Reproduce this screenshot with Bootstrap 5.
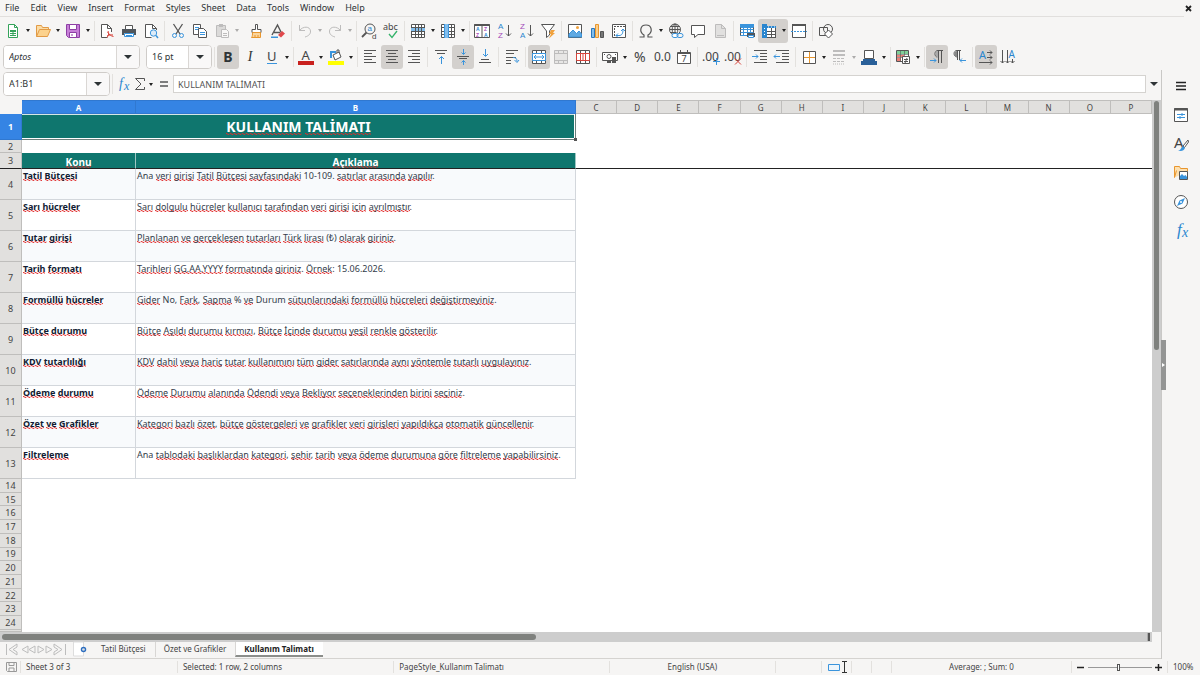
<!DOCTYPE html>
<html lang="tr">
<head>
<meta charset="utf-8">
<meta name="viewport" content="width=device-width, initial-scale=1">
<title>Tatil Bütçesi – Kullanım Talimatı</title>
<link href="https://cdn.jsdelivr.net/npm/bootstrap@5.3.0/dist/css/bootstrap.min.css" rel="stylesheet">
<style>
:root{--ui:#f6f5f4;--rule:#d5d3d0;--ink:#2e3436;--teal:#0f766e;--head:#e1e0de;--blue:#3584e4}
body{font-family:"Noto Sans","Open Sans",sans-serif;font-size:9px;line-height:12px;color:var(--ink);background:var(--ui)}
button{font:inherit;color:inherit;background:none;border:0;padding:0}
svg{display:block;fill:none;stroke:#555;stroke-width:1;overflow:visible}
svg text{stroke:none;fill:#444;font-family:"Noto Sans",sans-serif}
.b{stroke:#3a94dc}.fb{fill:#3a94dc;stroke:none}.lb{fill:#83beec;stroke:none}.r{stroke:#d8443c}.p{stroke:#a349b8}.w{fill:#fff}.o{stroke:#e8962e}.g{stroke:#34a35a}.k{fill:#555;stroke:none}
svg text.fb{fill:#2a86cf}svg text.tp{fill:#a349b8}
svg text.az{font-family:"Liberation Sans",sans-serif}
svg text.fx{font-family:"Liberation Serif",serif;font-style:italic}

/* menu and toolbars */
.menubar{height:17px}
.menubar::after{content:"";height:1px;background:#e1dfdd;position:absolute;left:0;right:16px;top:16px}
.menubar a{color:var(--ink);padding:2px 6px 2px 5px}
.toolrow{height:27px;padding-left:2px}
.toolrow.second{height:26px;padding-left:3px}
.tb{width:22px;height:24px;border-radius:3px;display:flex;align-items:center;justify-content:center;flex:none}
.tb.active,.pair.active{background:#d3d0cd;border-radius:3px}
.tb.mid{width:18px}.tb.slim{width:14px}
.dd{width:8px;height:24px;flex:none;display:flex;align-items:center;justify-content:center}
.dd::before{content:"";border:2px solid transparent;border-top:3px solid #222;border-bottom:0}
.tsep{width:5px;height:20px;flex:none;border-left:1px solid #e3e1de;margin-left:2px;margin-right:-2px}
.dd + .tsep{width:4px}
.off{opacity:.35}
.glyph{font-size:14px;line-height:14px}
.glyph.it{font-family:"Liberation Serif",serif}
.combo{height:24px;border:1px solid #cfccc9;border-radius:4px;background:#fff;overflow:hidden;flex:none}
.combo .form-control{font-size:9px;line-height:12px;padding:0 5px;border:0;border-radius:0;color:var(--ink);min-width:0;min-height:0;box-shadow:none}
.combo button{width:23px;background:#f9f8f8;border-left:1px solid #dad7d4;display:flex;align-items:center;justify-content:center;flex:none}
.tri::before{content:"";border:4px solid transparent;border-top:4px solid #2e3436;border-bottom:0}
.combo-font{width:137px}.combo-size{width:66px;margin-left:6px}.combo-name{width:107px}
.formula-row{height:30px;padding:0 3px 2px;flex:none}
.formula{height:18px;font-size:9px;line-height:12px;border:1px solid var(--rule);border-radius:0;padding:0 4px;color:#555;background:#fff}

/* sheet */
.shrinkable{min-height:0;min-width:0}
.work{border-right:1px solid #c9c8c6;min-width:0}
.grid-table{table-layout:fixed;width:100%;height:100%;border-collapse:separate;border-spacing:0;background:#fff}
.grid-table th,.grid-table td{padding:0;line-height:11px;overflow:hidden;white-space:nowrap}
.grid-table .rh{width:22px}.grid-table .ca{width:114px}.grid-table .cb{width:440px}
.grid-table thead th,.grid-table tbody th{background:var(--head);font-weight:400;text-align:center;vertical-align:middle;border-right:1px solid #bfbebc;border-bottom:1px solid #bfbebc;color:#444}
.grid-table thead th{height:14px;font-size:8px;border-top:1px solid #bfbebc}
.grid-table thead .corner{background:var(--ui);border-color:var(--ui)}
.grid-table thead .sel,.grid-table tbody .sel{background:var(--blue);color:#fff;font-weight:700;border-color:#3078d0}
.row-title{height:26px}.row-gap{height:13px}.row-head{height:16px}.row-item{height:31px}.row-rest{height:2px}
.row-title td.title{position:relative;overflow:visible;background:var(--teal);color:#fff;font-size:14px;line-height:20px;font-weight:700;text-align:center;border-bottom:1px solid #6b7f7b;border-right:1px solid #6b7f7b;box-shadow:inset -1px -1px #fff,inset 0 1px #d5e7e5}
.handle{position:absolute;right:-2px;bottom:-2px;width:3px;height:3px;background:#555}
.grid-table .row-head td,.grid-table .row-head th{border-bottom:1px solid #222}
.row-head .topic,.row-head .desc{background:var(--teal);color:#fff;font-size:10px;font-weight:700;text-align:center;vertical-align:bottom;line-height:12px;border-right:1px solid #9fc7c3}
.row-item .topic,.row-item .desc{vertical-align:top;padding:1px 0 0 1px;border-right:1px solid #d3d7dc;border-bottom:1px solid #d3d7dc}
.row-item .topic{font-weight:700;color:#111c33}
.row-item .desc{color:#333d4b}
.row-item:nth-child(even) .topic,.row-item:nth-child(even) .desc{background:#f8fafc}
.grid-table u{text-decoration:none;background:url("data:image/svg+xml,%3Csvg xmlns='http://www.w3.org/2000/svg' width='4' height='2'%3E%3Cpath d='M0 .5Q1 .5 2 1.300T4 .5' fill='none' stroke='%23e02b2b'/%3E%3C/svg%3E") repeat-x left bottom 1px}
.hbar{height:10px;background:#cdcdcd;padding:2px;flex:none}
.hbar div{height:6px;border-radius:3px;background:#7f817e;width:46.5%}
.hbar i{width:3px;height:8px;background:#555;border-left:1px solid #aaa;margin-top:-1px}
.vbar{width:9px;background:#cdcdcd;padding:1px 2px;margin-bottom:10px;flex:none}
.vbar div{height:47%;border-radius:3px;background:#7f817e}
.side{width:38px;flex:none;padding-top:1px}
.side .sb{width:38px;height:29px;display:flex;align-items:center;justify-content:center}
.grip{position:absolute;left:-1px;top:50%;margin-top:-25px;width:5px;height:50px;background:#949594}
.grip::before{content:"";position:absolute;left:1px;top:23px;border:2px solid transparent;border-left:3px solid #fff;border-right:0}

/* tabs and status */
.tabs{height:17px;border-bottom:1px solid var(--rule);flex:none}
.tabs a{color:#444;height:15px;line-height:14px;font-size:8px;padding:0 9px 0 8px;border-left:1px solid #d8d6d4}
.tabs a:first-of-type{border-color:transparent}
.tabs a.active{background:#fff;font-weight:700;border-bottom:2px solid #8b8d8a;color:#222}
.navi{width:64px}
.addsheet{margin:0 5px}
.status{height:16px;font-size:8px;color:#444}
.status>*{border-left:1px solid #e3e1de;height:12px;line-height:12px;padding:0 5px;white-space:nowrap}
.status>:first-child{border:0;width:20px;padding:0 0 0 6px}
.f1{flex:155 1 0}.f2{flex:218 1 0}.f3{flex:217 1 0}.f4{flex:165 1 0}
.s1{width:46px}.s2{width:30px}.s3{width:20px}.s4{width:180px}.s5{width:96px}.s6{width:33px}
.zoomer{appearance:none;width:64px;height:8px;background:linear-gradient(#999,#999) center/100% 1px no-repeat;margin:0}
.zoomer::-webkit-slider-thumb{appearance:none;width:3px;height:7px;border:1px solid #555;background:#fff}
</style>
</head>
<body class="vh-100 d-flex flex-column overflow-hidden">

<nav class="menubar d-flex align-items-start position-relative" aria-label="Menu">
  <a href="#" class="text-decoration-none">File</a><a href="#" class="text-decoration-none">Edit</a><a href="#" class="text-decoration-none">View</a><a href="#" class="text-decoration-none">Insert</a><a href="#" class="text-decoration-none">Format</a><a href="#" class="text-decoration-none">Styles</a><a href="#" class="text-decoration-none">Sheet</a><a href="#" class="text-decoration-none">Data</a><a href="#" class="text-decoration-none">Tools</a><a href="#" class="text-decoration-none">Window</a><a href="#" class="text-decoration-none">Help</a>
  <button class="ms-auto me-2 pt-1" aria-label="Close document"><svg width="7" height="8" viewBox="0 0 7 8"><path d="M1 2l5 5M6 2L1 7" stroke="#222" stroke-width="1.8"/></svg></button>
</nav>

<div class="toolrow d-flex align-items-center" role="toolbar" aria-label="Standard">
  <button class="tb" aria-label="New"><svg width="16" height="16"><path class="g w" d="M3.5 1.5h6l3 3v10h-9z"/><path class="g" d="M9.5 1.5v3h3M5 8.500h6M5 10.500h6M5 12.500h6M8 8v5"/><path d="M5 7h6v2H5z" fill="#34a35a" stroke="none"/></svg></button><button class="dd" aria-label="New options"></button>
  <button class="tb" aria-label="Open"><svg width="16" height="16"><path d="M1.500 13.500v-11h5l1 2h6v2" stroke="#e29a45" fill="#fbdca5"/><path d="M1.500 13.500l3-7h11l-3 7z" stroke="#e29a45" fill="#fcd28d"/></svg></button><button class="dd" aria-label="Open options"></button>
  <button class="tb" aria-label="Save"><svg width="16" height="16"><path d="M1.500 1.500h13v13h-11l-2-2z" stroke="#8e3fa5" fill="#c77fd8"/><path d="M4.500 1.500h7v5h-7zM4.500 9.500h7v5h-7z" class="w" stroke="#8e3fa5"/><path d="M6 12h2" stroke="#8e3fa5"/></svg></button><button class="dd" aria-label="Save options"></button>
  <span class="tsep"></span>
  <button class="tb" aria-label="Export as PDF"><svg width="16" height="16"><path class="w" d="M12.500 9V5.500l-4-4h-6v13h6"/><path d="M8.500 1.500v4h4"/><path class="r" d="M9 8c1 2 1 4-1 6.500M8.500 9c2 3 3.500 4 6 4.500M8 13c2-1 4-1.500 6-1"/></svg></button>
  <button class="tb" aria-label="Print"><svg width="16" height="16"><path class="w" d="M4.500 2.500h7v4h-7z"/><path d="M1 6h14v6h-2v-2H3v2H1z" fill="#50565c" stroke="none"/><path class="b w" d="M3.500 10.500h9v3h-9z"/><path class="b" d="M5 12.500h6"/></svg></button>
  <button class="tb" aria-label="Print preview"><svg width="16" height="16"><path class="w" d="M13.500 7V5.500l-4-4h-7v13h6"/><path d="M9.500 1.500v4h4"/><circle class="b" cx="10.500" cy="10" r="3.200" fill="#dcebf8"/><path class="b" d="M13 12.500l2 2.500" stroke-width="1.500"/></svg></button>
  <span class="tsep"></span>
  <button class="tb" aria-label="Cut"><svg width="16" height="16"><path d="M3.500 1l6.500 10M12.500 1L6 11" stroke-width="1.300"/><circle class="b" cx="4.500" cy="12.500" r="2"/><circle class="b" cx="11.500" cy="12.500" r="2"/></svg></button>
  <button class="tb" aria-label="Copy"><svg width="16" height="16"><path class="w" d="M1.500 1.500h7v10h-7z"/><path class="b" d="M3 4.500h4M3 6.500h4"/><path class="w" d="M6.500 5.500h5l3 3v6h-8z"/><path class="b" d="M8 9.500h5M8 11.500h5"/></svg></button>
  <button class="tb off" aria-label="Paste"><svg width="16" height="16"><path d="M2.500 2.500h9v11h-9z" fill="#aaa"/><path d="M5 1h4v3H5z" class="k"/><path class="w" d="M7.500 6.500h5l2 2v6h-7z"/><path d="M9 10.500h4M9 12.500h4"/></svg></button><button class="dd off" aria-label="Paste options"></button>
  <span class="tsep border-0"></span>
  <button class="tb" aria-label="Clone formatting"><svg width="16" height="16"><path d="M7.500 1.500h2v5h3.500v3H4v-3h3.500z" class="w"/><path class="o" d="M4.500 9.500h8v5h-9c1-1 1-3 1-5z" fill="#fbd49a"/><path class="o" d="M7 14v-2M10 14v-2"/></svg></button>
  <button class="tb" aria-label="Clear formatting"><svg width="16" height="16"><path d="M2 12L7.500 2l4 8M4 9.500h6" stroke-width="1.400"/><path class="fb" d="M1 13.500h7v1.500H1z"/><path d="M8 12l4-4 3 2.500-4 4z" fill="#e0484c" stroke="none"/></svg></button>
  <span class="tsep"></span>
  <button class="tb off" aria-label="Undo"><svg width="16" height="16"><path d="M2.500 2v5.500H8M2.500 7.500C6 3 13 3 13.500 8c.3 3-2 5-5.500 6"/></svg></button><button class="dd off" aria-label="Undo list"></button>
  <button class="tb off" aria-label="Redo"><svg width="16" height="16"><path d="M13.500 2v5.500H8M13.500 7.500C10 3 3 3 2.500 8c-.3 3 2 5 5.500 6"/></svg></button><button class="dd off" aria-label="Redo list"></button>
  <span class="tsep"></span>
  <button class="tb" aria-label="Find and replace"><svg width="16" height="16"><circle cx="9" cy="6" r="5"/><path d="M5.500 9.500L1 14" stroke-width="1.800"/><text class="fb az" x="6.500" y="7.500" font-size="8">a</text><text class="az" x="11" y="15.500" font-size="8">d</text></svg></button>
  <button class="tb" aria-label="Spelling"><svg width="18" height="16"><text x="1" y="7" font-size="9">abc</text><path d="M7 11l3 3.500L15 8" stroke="#34b36a" stroke-width="1.300"/></svg></button>
  <span class="tsep"></span>
  <button class="tb" aria-label="Row"><svg width="16" height="16"><path class="w" d="M1.500 1.500h13v13h-13z"/><path class="lb" d="M1 5h14v3H1z"/><path d="M1.500 4.500h13M1.500 8.500h13M1.500 11.500h13M5.500 1v13M8.500 1v13M11.500 1v13"/></svg></button><button class="dd" aria-label="Row options"></button>
  <button class="tb" aria-label="Column"><svg width="16" height="16"><path class="w" d="M1.500 1.500h13v13h-13z"/><path d="M1.500 4.500h13M1.500 8.500h13M1.500 11.500h13M11.500 1v13"/><path class="lb" d="M4.500 1h4v14h-4z"/><path class="b" d="M4.500 1v14M8.500 1v14"/></svg></button><button class="dd" aria-label="Column options"></button>
  <span class="tsep"></span>
  <button class="tb" aria-label="Sort"><svg width="16" height="16"><path class="w" d="M.5 1.500h15v13H.5zM8 2v12"/><path d="M.5 2h15" stroke-width="2"/><text class="fb az" x="2" y="8" font-size="5" font-weight="700">A</text><text class="tp az" x="2" y="14" font-size="5" font-weight="700">Z</text><text class="tp az" x="10" y="8" font-size="5" font-weight="700">Z</text><text class="fb az" x="10" y="14" font-size="5" font-weight="700">A</text></svg></button>
  <button class="tb" aria-label="Sort ascending"><svg width="16" height="16"><text class="fb az" x="2" y="6" font-size="8">A</text><text class="tp az" x="2" y="15" font-size="8">Z</text><path d="M12.500 2v11M10 10.500l2.500 2.500 2.500-2.500"/></svg></button>
  <button class="tb" aria-label="Sort descending"><svg width="16" height="16"><text class="tp az" x="2" y="6" font-size="8">Z</text><text class="fb az" x="2" y="15" font-size="8">A</text><path d="M12.500 2v11M10 10.500l2.500 2.500 2.500-2.500"/></svg></button>
  <button class="tb" aria-label="AutoFilter"><svg width="16" height="16"><path class="w" d="M1.500 1.500h13L9.500 8v4l-3 2.500V8z"/><path d="M11 7h4l-2 3h2l-6 5.500L11 11H9z" fill="#f0a13c" stroke="none"/></svg></button>
  <span class="tsep"></span>
  <button class="tb" aria-label="Insert image"><svg width="16" height="16"><path class="w" d="M1.500 1.500h13v13h-13z"/><path d="M2 14v-3l4-4 3.500 3.500L12 8l2.500 3v3z" fill="#5fa9e2" class="b"/><circle cx="10.500" cy="4.500" r="1.500" fill="#f0a13c" stroke="none"/></svg></button>
  <button class="tb" aria-label="Insert chart"><svg width="16" height="16"><path d="M2.500 5.500h3v9h-3z" fill="#83beec" stroke="#2a78bd"/><path class="o" d="M6.500 1.500h3v13h-3z" fill="#fbcf8c"/><path d="M11.500 8.500h3v6h-3z" fill="#777"/></svg></button>
  <button class="tb" aria-label="Pivot table"><svg width="16" height="16"><path class="w" d="M1.500 1.500h13v13h-13z"/><path d="M3 3.500h11M3.500 5v9" stroke-dasharray="2 1"/><path class="b" d="M5 12.500h3c3 0 4-2 4-6M10 8l2-2 2 2M7 10.500l-2 2 2 2"/></svg></button>
  <span class="tsep"></span>
  <button class="tb" aria-label="Special character"><svg width="16" height="16"><path d="M1.500 14H6v-2C1 9 2 2 8 2s7 7 2 10v2h4.500" stroke-width="1.200"/></svg></button><button class="dd" aria-label="Special character list"></button>
  <button class="tb" aria-label="Hyperlink"><svg width="16" height="16"><circle cx="7" cy="6.500" r="5.500"/><path d="M1.500 6.500h11M2.500 3.500h9M2.500 9.500h6M7 1v11"/><ellipse cx="7" cy="6.500" rx="2.800" ry="5.500"/><rect class="b w" x="4" y="10.500" width="6" height="4" rx="2"/><rect class="b" x="9" y="10.500" width="6" height="4" rx="2"/></svg></button>
  <button class="tb" aria-label="Comment"><svg width="16" height="16"><path class="w" d="M1.500 2.500h13v9H8l-3.500 3v-3h-3z"/></svg></button>
  <button class="tb off" aria-label="Headers and footers"><svg width="16" height="16"><path d="M3.500 1.500h6l4 4v9h-10z" fill="#bbb"/><path d="M9.500 1.500v4h4M5 12.500h7"/></svg></button>
  <span class="tsep"></span>
  <button class="tb" aria-label="Print area"><svg width="16" height="16"><path class="w" d="M1.500 1.500h13v11h-13z"/><path class="fb" d="M1 1h14v3H1z"/><path class="b" d="M1.500 4.500h13M1.500 6.500h13M1.500 9.500h13M1.500 12.500h7M4.500 1v12M8.500 4v9M11.500 4v6"/><path d="M8 10h8v4H8z" fill="#50565c" stroke="none"/><path class="w b" d="M9.500 12.500h5v2h-5z"/></svg></button>
  <span class="pair active d-flex"><button class="tb" aria-label="Freeze rows and columns"><svg width="16" height="16"><path class="w" d="M1.500 3.500h13v11h-13z"/><path d="M1.500 8.500h13M1.500 11.500h13M10.500 4v11M14.500 4v11"/><path fill="#2a86cf" stroke="none" d="M1 3h14v2H1zM1 1h5v14H1z"/><path stroke="#fff" d="M3.500 5v9M7 4h7" stroke-dasharray="1 2"/></svg></button><button class="dd" aria-label="Freeze options"></button></span>
  <button class="tb" aria-label="Split window"><svg width="16" height="16"><path class="w" d="M1.500 1.500h13v13h-13z"/><path d="M1 2h14" stroke-width="2"/><path class="b" d="M0 8.500h16" stroke-dasharray="2 1"/></svg></button>
  <span class="tsep"></span>
  <button class="tb" aria-label="Draw functions"><svg width="16" height="16"><path d="M1.500 4.500h8v8h-8z"/><circle cx="10" cy="6" r="4.500"/><path class="w" d="M10.500 7l4 4-4 4-4-4z"/></svg></button>
</div>

<div class="toolrow second d-flex align-items-center" role="toolbar" aria-label="Formatting">
  <div class="combo combo-font d-flex"><input class="form-control fst-italic" value="Aptos" aria-label="Font name"><button class="tri" aria-label="Font list"></button></div>
  <div class="combo combo-size d-flex"><input class="form-control" value="16 pt" aria-label="Font size"><button class="tri" aria-label="Size list"></button></div>
  <span class="tsep"></span>
  <button class="tb active" aria-label="Bold"><b class="glyph">B</b></button>
  <button class="tb" aria-label="Italic"><i class="glyph it">I</i></button>
  <button class="tb" aria-label="Underline"><svg width="16" height="16"><text x="3" y="12" font-size="13">U</text><path class="b" d="M3 14.500h10"/></svg></button><button class="dd" aria-label="Underline styles"></button>
  <span class="tsep"></span>
  <button class="tb" aria-label="Font colour"><svg width="16" height="16"><text x="3.500" y="10.500" font-size="13">A</text><path d="M0 12h16v4H0z" fill="#c9211e" stroke="none"/></svg></button><button class="dd" aria-label="Font colours"></button>
  <button class="tb" aria-label="Background colour"><svg width="16" height="16"><path class="b" d="M3 9V3h5" stroke-width="2"/><path class="w" d="M5 6l6-3 2 5-6 3zM9 4V1h2v3"/><path d="M0 12h16v4H0z" fill="#ff0" stroke="none"/></svg></button><button class="dd" aria-label="Background colours"></button>
  <span class="tsep"></span>
  <button class="tb" aria-label="Align left"><svg width="16" height="16"><path d="M2 1.500h12M2 4.500h8M2 7.500h12M2 10.500h8M2 13.500h12"/></svg></button>
  <button class="tb active" aria-label="Align centre"><svg width="16" height="16"><path d="M2 1.500h12M4 4.500h8M2 7.500h12M4 10.500h8M2 13.500h12"/></svg></button>
  <button class="tb" aria-label="Align right"><svg width="16" height="16"><path d="M2 1.500h12M6 4.500h8M2 7.500h12M6 10.500h8M2 13.500h12"/></svg></button>
  <span class="tsep"></span>
  <button class="tb" aria-label="Align top"><svg width="16" height="16"><path d="M2 1.500h12M4 4.500h8"/><path class="b" d="M8.500 15V7.500M6 10l2.500-2.500L11 10"/></svg></button>
  <button class="tb active" aria-label="Centre vertically"><svg width="16" height="16"><path d="M2 7.500h12M4 9.500h8"/><path class="b" d="M8.500 0v5M6.500 3.500l2 2 2-2M8.500 16v-4.500M6.500 13.500l2-2 2 2"/></svg></button>
  <button class="tb" aria-label="Align bottom"><svg width="16" height="16"><path d="M2 13.500h12M4 10.500h8"/><path class="b" d="M8.500 0v7M6 5l2.500 2.500L11 5"/></svg></button>
  <span class="tsep"></span>
  <button class="tb" aria-label="Wrap text"><svg width="16" height="16"><path d="M2 1.500h12M2 4.500h8M2 8.500h10M2 11.500h5M2 14.500h5"/><path class="b" d="M9 8.500c3 0 4 1 4 4M10.500 11l2.500 2.500L15 11"/></svg></button>
  <span class="tsep"></span>
  <button class="tb active" aria-label="Merge and centre cells"><svg width="16" height="16"><path class="w" d="M1.500 1.500h13v13h-13zM1.500 4.500h13M1.500 11.500h13M5.500 1v3M10.500 1v3M5.500 12v3M10.500 12v3"/><path class="b w" d="M1.500 4.500h13v7h-13z"/><path class="b" d="M3 8h10M5 6L3 8l2 2M11 6l2 2-2 2"/></svg></button>
  <button class="tb off" aria-label="Merge cells"><svg width="16" height="16"><path fill="#ccc" d="M1.500 1.500h13v13h-13zM1.500 4.500h13M1.500 11.500h13M5.500 1v3M10.500 1v3M5.500 12v3M10.500 12v3"/></svg></button>
  <button class="tb" aria-label="Unmerge cells"><svg width="16" height="16"><path class="w" d="M1.500 1.500h13v13h-13zM5.500 1v14M10.500 1v14"/><path class="r" d="M1.500 4.500h13v7h-13zM5.500 4.500v7M8 4.500v7M10.500 4.500v7"/></svg></button>
  <span class="tsep"></span>
  <button class="tb" aria-label="Currency"><svg width="16" height="16"><path class="w" d="M.5 3.500h15v8H.5z"/><circle cx="7" cy="7.500" r="2"/><path d="M2 5h1v1H2zM13 5h1v1h-1zM5 11h4v3H5zM10 8h4v6h-4z" class="k"/></svg></button><button class="dd" aria-label="Currency formats"></button>
  <button class="tb" aria-label="Percent"><svg width="16" height="16"><text x="2" y="13" font-size="14">%</text></svg></button>
  <button class="tb" aria-label="Number"><svg width="16" height="16"><text x="0" y="12" font-size="12">0.0</text></svg></button>
  <button class="tb" aria-label="Date"><svg width="16" height="16"><path class="w" d="M1.500 3.500h13v11h-13z"/><path d="M1.500 4.500h13M4.500 1v3M11.500 1v3"/><text x="5.500" y="13" font-size="9">7</text></svg></button>
  <span class="tsep"></span>
  <button class="tb" aria-label="Add decimal place"><svg width="16" height="16"><text x="-1" y="12" font-size="12">.00</text><path class="b" d="M10 12.500h7M13.500 9v7"/></svg></button>
  <button class="tb" aria-label="Delete decimal place"><svg width="16" height="16"><text x="-1" y="12" font-size="12">.00</text><path class="r" d="M10 9.500l6 6M16 9.500l-6 6"/></svg></button>
  <span class="tsep"></span>
  <button class="tb" aria-label="Increase indent"><svg width="16" height="16"><path d="M2 1.500h13M8 4.500h7M8 7.500h7M8 10.500h7M2 13.500h13"/><path class="b" d="M0 7.500h6M4 5.500l2 2-2 2"/></svg></button>
  <button class="tb" aria-label="Decrease indent"><svg width="16" height="16"><path d="M2 1.500h13M8 4.500h7M8 7.500h7M8 10.500h7M2 13.500h13"/><path class="b" d="M0 7.500h6M2 5.500l-2 2 2 2"/></svg></button>
  <span class="tsep"></span>
  <button class="tb" aria-label="Borders"><svg width="16" height="16"><path class="w" d="M2.500 2.500h12v12h-12z"/><path class="o" d="M8.500 3v11M3 8.500h11"/></svg></button><button class="dd" aria-label="Border list"></button>
  <button class="tb off" aria-label="Border style"><svg width="16" height="16"><path d="M2 2h12M2 6h12" stroke-width="2"/><path d="M2 9.500h12M2 12.500h12" stroke-dasharray="3 1"/><path d="M2 15h12" stroke-dasharray="1 1"/></svg></button><button class="dd off" aria-label="Border styles"></button>
  <button class="tb" aria-label="Border colour"><svg width="16" height="16"><path class="w" d="M3.500 1.500h9v8h-9z"/><path d="M0 12h16v4H0zM2 10h12v2H2z" fill="#2a6099" stroke="none"/></svg></button><button class="dd" aria-label="Border colours"></button>
  <span class="tsep"></span>
  <button class="tb" aria-label="Conditional formatting"><svg width="16" height="16"><path class="w" d="M1.500 1.500h12v11h-12z"/><path d="M2 2h11v3H2z" fill="#7fcf98" stroke="none"/><path d="M2 6h7v2H2zM2 9h4v3H2z" fill="#e98078" stroke="none"/><path d="M1.500 5.500h12M1.500 8.500h12M5.500 1v12M9.500 1v12" stroke-opacity=".6"/><path class="w" d="M7.500 7.500h7v7h-7z"/><path d="M9 10.500h4M9 12.500h4M12 9l-2 5"/></svg></button><button class="dd" aria-label="Conditional list"></button>
  <span class="tsep"></span>
  <button class="tb active" aria-label="Left-to-right"><svg width="16" height="16"><path d="M8.500 8C5 8 5 1.500 9 1.500h5M9.500 1.500V14M12.500 1.500V14"/><path d="M9 2v6C5.500 8 5.500 2 9 2z" fill="#aaa" stroke="none"/><path class="b" d="M1 11.500h6M5 9.500l2 2-2 2"/></svg></button>
  <button class="tb" aria-label="Right-to-left"><svg width="16" height="16"><path d="M6.500 8C2 8 2 1.500 6 1.500h4M6.500 1.500V11M8.500 1.500V11"/><path d="M6 2v6C2.500 8 2.500 2 6 2z" fill="#888" stroke="none"/><path class="b" d="M9 11.500h6M11 9.500l-2 2 2 2"/></svg></button>
  <span class="tsep"></span>
  <button class="tb active" aria-label="Horizontal text"><svg width="16" height="16"><text class="fb" x="1" y="10" font-size="11">A</text><path d="M9 3.500h5M9 8.500h5M1 13.500h13M12 1.500l2 2-2 2M12 6.500l2 2-2 2M12 11.500l2 2-2 2"/></svg></button>
  <button class="tb" aria-label="Vertical text"><svg width="16" height="16"><text class="fb" x="8.500" y="9" font-size="10">A</text><path d="M2.500 1v13M7.500 1v13M12.500 10v4M.5 12l2 2 2-2M5.500 12l2 2 2-2M10.500 12l2 2 2-2"/></svg></button>
</div>

<div class="d-flex flex-grow-1 shrinkable">
  <div class="work flex-grow-1 d-flex flex-column">
    <div class="formula-row d-flex align-items-center">
      <div class="combo combo-name d-flex"><input class="form-control" value="A1:B1" aria-label="Name box"><button class="tri" aria-label="Names"></button></div>
      <span class="tsep"></span>
      <button class="tb mid" aria-label="Function wizard"><svg width="16" height="16"><text class="fb fx" x="3" y="12" font-size="14">f</text><text class="fb fx" x="8" y="14" font-size="12">x</text></svg></button>
      <button class="tb slim" aria-label="Sum"><svg width="12" height="14"><path d="M10.500 4V1.500h-9L7 7l-5.500 5.500h9V10"/></svg></button><button class="dd" aria-label="Functions"></button>
      <button class="tb mid" aria-label="Formula"><svg width="10" height="8"><path d="M1 2h8M1 6h8" stroke-width="1.500"/></svg></button>
      <input class="form-control formula" value="KULLANIM TALİMATI" aria-label="Input line">
      <button class="tri d-flex ps-1" aria-label="Expand formula bar"></button>
    </div>
    <div class="d-flex flex-grow-1 shrinkable">
      <div class="d-flex flex-column flex-grow-1 shrinkable">
        <div class="flex-grow-1 overflow-hidden shrinkable">
        <table class="grid-table">
          <thead><tr><th class="rh corner"></th><th class="ca sel">A</th><th class="cb sel">B</th><th>C</th><th>D</th><th>E</th><th>F</th><th>G</th><th>H</th><th>I</th><th>J</th><th>K</th><th>L</th><th>M</th><th>N</th><th>O</th><th>P</th></tr></thead>
          <tbody>
          <tr class="row-title"><th class="sel">1</th><td colspan="2" class="title"><span data-spell>KULLANIM TALİMATI</span><span class="handle"></span></td><td colspan="14"></td></tr>
          <tr class="row-gap"><th>2</th><td colspan="16"></td></tr>
          <tr class="row-head"><th>3</th><td class="topic" data-spell>Konu</td><td class="desc" data-spell>Açıklama</td><td colspan="14"></td></tr>
          <tr class="row-item"><th>4</th><td class="topic" data-spell>Tatil Bütçesi</td><td class="desc" data-spell>Ana veri girişi Tatil Bütçesi sayfasındaki 10-109. satırlar arasında yapılır.</td><td colspan="14"></td></tr>
          <tr class="row-item"><th>5</th><td class="topic" data-spell>Sarı hücreler</td><td class="desc" data-spell>Sarı dolgulu hücreler kullanıcı tarafından veri girişi için ayrılmıştır.</td><td colspan="14"></td></tr>
          <tr class="row-item"><th>6</th><td class="topic" data-spell>Tutar girişi</td><td class="desc" data-spell>Planlanan ve gerçekleşen tutarları Türk lirası (₺) olarak giriniz.</td><td colspan="14"></td></tr>
          <tr class="row-item"><th>7</th><td class="topic" data-spell>Tarih formatı</td><td class="desc" data-spell>Tarihleri GG.AA.YYYY formatında giriniz. Örnek: 15.06.2026.</td><td colspan="14"></td></tr>
          <tr class="row-item"><th>8</th><td class="topic" data-spell>Formüllü hücreler</td><td class="desc" data-spell>Gider No, Fark, Sapma % ve Durum sütunlarındaki formüllü hücreleri değiştirmeyiniz.</td><td colspan="14"></td></tr>
          <tr class="row-item"><th>9</th><td class="topic" data-spell>Bütçe durumu</td><td class="desc" data-spell>Bütçe Aşıldı durumu kırmızı, Bütçe İçinde durumu yeşil renkle gösterilir.</td><td colspan="14"></td></tr>
          <tr class="row-item"><th>10</th><td class="topic" data-spell>KDV tutarlılığı</td><td class="desc" data-spell>KDV dahil veya hariç tutar kullanımını tüm gider satırlarında aynı yöntemle tutarlı uygulayınız.</td><td colspan="14"></td></tr>
          <tr class="row-item"><th>11</th><td class="topic" data-spell>Ödeme durumu</td><td class="desc" data-spell>Ödeme Durumu alanında Ödendi veya Bekliyor seçeneklerinden birini seçiniz.</td><td colspan="14"></td></tr>
          <tr class="row-item"><th>12</th><td class="topic" data-spell>Özet ve Grafikler</td><td class="desc" data-spell>Kategori bazlı özet, bütçe göstergeleri ve grafikler veri girişleri yapıldıkça otomatik güncellenir.</td><td colspan="14"></td></tr>
          <tr class="row-item"><th>13</th><td class="topic" data-spell>Filtreleme</td><td class="desc" data-spell>Ana tablodaki başlıklardan kategori, şehir, tarih veya ödeme durumuna göre filtreleme yapabilirsiniz.</td><td colspan="14"></td></tr>
          <tr><th>14</th><td colspan="16"></td></tr>
          <tr><th>15</th><td colspan="16"></td></tr>
          <tr><th>16</th><td colspan="16"></td></tr>
          <tr><th>17</th><td colspan="16"></td></tr>
          <tr><th>18</th><td colspan="16"></td></tr>
          <tr><th>19</th><td colspan="16"></td></tr>
          <tr><th>20</th><td colspan="16"></td></tr>
          <tr><th>21</th><td colspan="16"></td></tr>
          <tr><th>22</th><td colspan="16"></td></tr>
          <tr><th>23</th><td colspan="16"></td></tr>
          <tr><th>24</th><td colspan="16"></td></tr>
          <tr class="row-rest"><th></th><td colspan="16"></td></tr>
          </tbody>
        </table>
        </div>
        <div class="hbar d-flex justify-content-between"><div></div><i></i></div>
      </div>
      <div class="vbar"><div></div></div>
    </div>
    <nav class="tabs d-flex align-items-start" aria-label="Sheets">
      <button class="navi ms-1" aria-label="Scroll sheets"><svg width="64" height="14"><path stroke="#bdbdbd" d="M2.500 2v11M13 2L5 7.500l8 5.500v-3l-4-2.500L13 5zM24 4l-6 3.500 6 3.500zM31 4l-6 3.500 6 3.500zM34 4l6 3.500-6 3.500zM42 4l6 3.500-6 3.500zM50 2l8 5.500-8 5.500v-3l4-2.500L50 5zM61.500 2v11"/></svg></button>
      <button class="addsheet" aria-label="Add sheet"><svg width="14" height="15"><path d="M.5 0h10v14H.5z" fill="#fff" stroke="#ddd"/><circle cx="10.500" cy="7.500" r="2" stroke="#2f6fbf" stroke-width="1.500"/></svg></button>
      <a href="#" class="text-decoration-none">Tatil Bütçesi</a><a href="#" class="text-decoration-none">Özet ve Grafikler</a><a href="#" class="text-decoration-none active">Kullanım Talimatı</a>
    </nav>
  </div>
  <aside class="side position-relative" aria-label="Sidebar">
    <button class="sb" aria-label="Sidebar settings"><svg width="10" height="10"><path d="M0 1.500h10M0 5h10M0 8.500h10" stroke="#222" stroke-width="1.400"/></svg></button>
    <button class="sb" aria-label="Properties"><svg width="16" height="16"><path class="w" d="M1.500 1.500h13v13h-13z"/><path d="M1 2.500h14" stroke-width="2"/><path class="b" d="M4 7.500h8M4 10.500h8M9 6v3M7 9v3"/></svg></button>
    <button class="sb" aria-label="Styles"><svg width="16" height="16"><text x="1" y="12" font-size="15">A</text><path class="w" d="M15 4l-5 6 1.500 1.500L15.500 6z"/><path class="fb" d="M10 10l2 2c-1 3-4 3.500-7 2.500 3 0 3-3 5-4.500z"/></svg></button>
    <button class="sb" aria-label="Gallery"><svg width="16" height="16"><path class="o" d="M1.500 12.500v-11h5l1 2h7v3M1.500 12.500l2-7" fill="#fde0b0"/><path class="w" d="M6.500 6.500h8v8h-8z"/><path class="fb" d="M7 14v-3l2-2 2 2 1.500-1L14 12v2z"/></svg></button>
    <button class="sb" aria-label="Navigator"><svg width="16" height="16"><circle class="w" cx="8" cy="8" r="6.500"/><path class="fb" d="M12 4l-2.500 5.500L4 12l2.500-5.500z"/><circle cx="8" cy="8" r="1" fill="#fff" stroke="none"/></svg></button>
    <button class="sb" aria-label="Functions"><svg width="16" height="18"><text class="fb fx" x="4" y="13" font-size="17">f</text><text class="fb fx" x="9" y="15" font-size="14">x</text></svg></button>
    <span class="grip"></span>
  </aside>
</div>

<footer class="status d-flex align-items-center">
  <span><svg width="12" height="12"><path stroke="#999" d="M.5 1.500h10v9h-9l-1-1zM3 1.500h5v3H3zM3 7h5v3.500H3z"/></svg></span>
  <span class="f1">Sheet 3 of 3</span>
  <span class="f2">Selected: 1 row, 2 columns</span>
  <span class="f3">PageStyle_Kullanım Talimatı</span>
  <span class="f4 text-center">English (USA)</span>
  <span class="s1"></span>
  <span class="s2"><svg width="22" height="12"><path class="b" d="M1.500 3.500h11v6h-11z" fill="#eef5fb"/><path d="M17.500 1v10M15 .5h5M15 11.500h5" stroke="#333"/></svg></span>
  <span class="s3"></span>
  <span class="s3"></span>
  <span class="s4 text-center">Average: ; Sum: 0</span>
  <span class="s5 d-flex align-items-center justify-content-between"><button aria-label="Zoom out"><svg width="7" height="7"><path d="M0 3.500h7" stroke="#222" stroke-width="1.500"/></svg></button><input class="zoomer" type="range" min="0" max="100" value="48" aria-label="Zoom"><button aria-label="Zoom in"><svg width="7" height="7"><path d="M0 3.500h7M3.500 0v7" stroke="#222" stroke-width="1.500"/></svg></button></span>
  <span class="s6">100%</span>
</footer>

<script src="https://cdn.jsdelivr.net/npm/bootstrap@5.3.0/dist/js/bootstrap.bundle.min.js"></script>
<script>
// Underline every word the spelling checker does not know.
const known = new Set(['Ana', 'No', 'Durum', '%', '(₺)', '10-109', '15.06.2026']);
document.querySelectorAll('[data-spell]').forEach(cell => {
  const parts = cell.textContent.split(/(\s+|[.,:]+(?=\s|$))/);
  cell.textContent = '';
  parts.forEach(part => {
    if (/^[\s,:.]*$/.test(part) || known.has(part)) { cell.append(part); return; }
    const u = document.createElement('u');
    u.textContent = part;
    cell.append(u);
  });
});
</script>
</body>
</html>
